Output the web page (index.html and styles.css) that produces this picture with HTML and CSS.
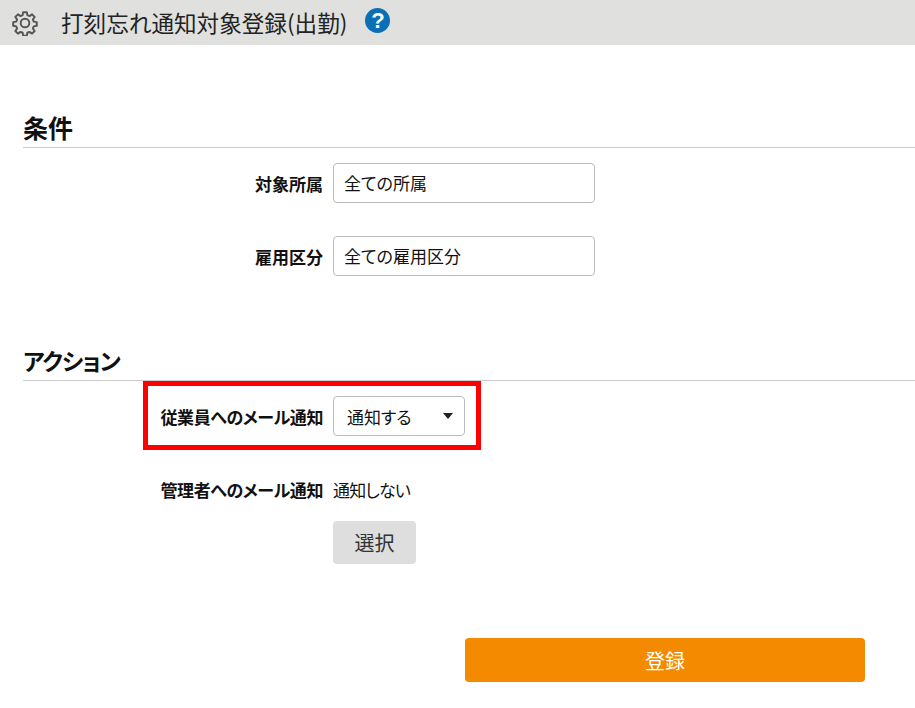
FILE: index.html
```html
<!DOCTYPE html>
<html lang="ja">
<head>
<meta charset="utf-8">
<title>打刻忘れ通知対象登録(出勤)</title>
<link rel="stylesheet" href="styles.css">
</head>
<body>
<header class="topbar">
  <svg class="gear" viewBox="0 0 24 24" width="26" height="26" fill="none" stroke="#555" stroke-width="1.8" stroke-linejoin="round">
    <path d="M10.3 2h3.4l.5 2.8 1.9.8 2.4-1.6 2.4 2.4-1.6 2.4.8 1.9 2.8.5v3.4l-2.8.5-.8 1.9 1.6 2.4-2.4 2.4-2.4-1.6-1.9.8-.5 2.8h-3.4l-.5-2.8-1.9-.8-2.4 1.6-2.4-2.4 1.6-2.4-.8-1.9-2.8-.5v-3.4l2.8-.5.8-1.9-1.6-2.4 2.4-2.4 2.4 1.6 1.9-.8z"/>
    <circle cx="12" cy="12" r="4"/>
  </svg>
  <h1 class="title">打刻忘れ通知対象登録(出勤)</h1>
  <span class="help">?</span>
</header>

<main class="content">
  <section class="section section-cond">
    <h2 class="section-title">条件</h2>
    <div class="row row-first">
      <span class="label">対象所属</span>
      <div class="field">全ての所属</div>
    </div>
    <div class="row row-second">
      <span class="label">雇用区分</span>
      <div class="field">全ての雇用区分</div>
    </div>
  </section>

  <section class="section section-action">
    <h2 class="section-title section-title-kana">アクション</h2>
    <div class="row row-select">
      <div class="highlight"></div>
      <span class="label label-kana">従業員へのメール通知</span>
      <div class="select">
        <span>通知する</span>
        <span class="caret"></span>
      </div>
    </div>
    <div class="row row-admin">
      <span class="label label-kana">管理者へのメール通知</span>
      <span class="value">通知しない</span>
    </div>
    <div class="row row-choose">
      <span class="label"></span>
      <button class="btn-choose" type="button">選択</button>
    </div>
  </section>

  <div class="actions">
    <button class="btn-submit" type="button">登録</button>
  </div>
</main>
</body>
</html>
```

FILE: styles.css
```css
* { box-sizing: border-box; }

body {
  margin: 0;
  background: #fff;
  color: #111;
  font-family: "Noto Sans CJK JP", "Noto Sans", sans-serif;
  font-size: 17px;
  font-feature-settings: "palt";
}

.topbar {
  display: flex;
  align-items: center;
  height: 45px;
  padding-left: 12px;
  background: #e0e0de;
}

.gear { flex: none; }

.title {
  margin: 0 0 0 23px;
  font-size: 22.6px;
  font-weight: 400;
  line-height: 45px;
  color: #222;
}

.help {
  display: flex;
  align-items: center;
  justify-content: center;
  width: 25px;
  height: 25px;
  margin: -4px 0 0 18px;
  border-radius: 50%;
  background: #0a6fb5;
  color: #fff;
  font-family: "Liberation Sans", sans-serif;
  font-size: 22px;
  font-weight: 700;
}

.section-cond { margin-top: 64px; }
.section-action { margin-top: 66px; }

.section-title {
  height: 39px;
  margin: 0 0 0 23px;
  border-bottom: 1px solid #ccc;
  font-size: 25px;
  font-weight: 700;
  line-height: 36px;
}

.section-title-kana {
  font-size: 23px;
  letter-spacing: -1px;
}

.row {
  position: relative;
  display: flex;
  align-items: center;
}

.row-first { margin-top: 15px; }
.row-second { margin-top: 33px; }
.row-select { margin-top: 15px; }
.row-admin { margin-top: 33px; height: 40px; }
.row-choose { margin-top: 12px; }

.label {
  flex: none;
  width: 323px;
  font-weight: 700;
  text-align: right;
}

.label-kana { letter-spacing: -0.4px; }

.field {
  width: 262px;
  height: 40px;
  margin-left: 10px;
  padding-left: 10px;
  border: 1px solid #bbb;
  border-radius: 4px;
  line-height: 38px;
}

.select {
  display: flex;
  align-items: center;
  justify-content: space-between;
  width: 132px;
  height: 40px;
  margin-left: 10px;
  padding: 0 11px 0 13px;
  border: 1px solid #bbb;
  border-radius: 4px;
}

.caret {
  width: 0;
  height: 0;
  border-left: 5.5px solid transparent;
  border-right: 5.5px solid transparent;
  border-top: 6px solid #222;
}

.highlight {
  position: absolute;
  left: 143px;
  top: -15px;
  width: 338px;
  height: 69px;
  border: 5px solid #f00;
}

.value {
  margin-left: 10px;
  letter-spacing: -0.8px;
}

.btn-choose {
  width: 83px;
  height: 43px;
  margin-left: 10px;
  border: 0;
  border-radius: 4px;
  background: #dedede;
  color: #333;
  font: inherit;
  font-size: 20px;
}

.actions {
  display: flex;
  justify-content: flex-end;
  margin-top: 74px;
  padding-right: 50px;
}

.btn-submit {
  width: 400px;
  height: 44px;
  border: 0;
  border-radius: 4px;
  background: #f38a00;
  color: #fff;
  font: inherit;
  font-size: 20px;
}
```
